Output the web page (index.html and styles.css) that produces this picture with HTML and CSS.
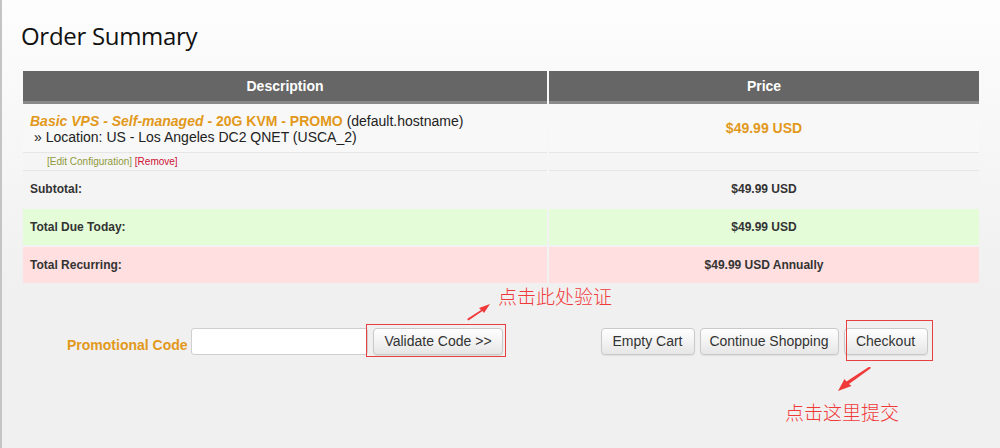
FILE: index.html
```html
<!DOCTYPE html>
<html lang="en">
<head>
<meta charset="utf-8">
<title>Order Summary</title>
<link rel="stylesheet" href="styles.css">
</head>
<body>
<div class="page">
  <h1 class="title">Order Summary</h1>
  <div class="cart">
    <div class="row head">
      <div class="cell">Description</div>
      <div class="cell">Price</div>
    </div>
    <div class="row product">
      <div class="cell desc">
        <div><em class="prod">Basic VPS - Self-managed</em><strong class="prod"> - 20G KVM - PROMO</strong> (default.hostname)</div>
        <div class="opt">&raquo; Location: US - Los Angeles DC2 QNET (USCA_2)</div>
      </div>
      <div class="cell price">$49.99 USD</div>
    </div>
    <div class="row edit">
      <div class="cell links"><span class="cfg">[Edit Configuration]</span> <span class="rm">[Remove]</span></div>
      <div class="cell"></div>
    </div>
    <div class="row total sub">
      <div class="cell">Subtotal:</div>
      <div class="cell amt">$49.99 USD</div>
    </div>
    <div class="row total due">
      <div class="cell">Total Due Today:</div>
      <div class="cell amt">$49.99 USD</div>
    </div>
    <div class="row total rec">
      <div class="cell">Total Recurring:</div>
      <div class="cell amt">$49.99 USD Annually</div>
    </div>
  </div>
  <div class="actions">
    <div class="promo">
      <label class="promo-label" for="code">Promotional Code</label>
      <input id="code" class="promo-input" type="text">
      <span class="mark">
        <button class="btn btn-validate" type="button">Validate Code &gt;&gt;</button>
        <span class="box box-validate"></span>
      </span>
    </div>
    <div class="buttons">
      <button class="btn btn-empty" type="button">Empty Cart</button>
      <button class="btn btn-continue" type="button">Continue Shopping</button>
      <span class="mark">
        <button class="btn btn-checkout" type="button">Checkout</button>
        <span class="box box-checkout"></span>
      </span>
    </div>
  </div>

  <div class="note note-validate">
    <svg class="arrow" width="26" height="18" viewBox="0 0 26 18"><path d="M1 16 L15 7 L13 5 L24 1 L18 10 L16.5 8 L2.5 17.5 Z" fill="#f03a3a"/></svg>
    <span class="note-text">点击此处验证</span>
  </div>
  <div class="note note-checkout">
    <svg class="arrow" width="36" height="26" viewBox="0 0 36 26"><path d="M34 1 L12 17 L14.5 19 L1 24 L7.5 12 L9.5 14.5 L32.5 -0.5 Z" fill="#f03a3a"/></svg>
    <span class="note-text">点击这里提交</span>
  </div>
</div>
</body>
</html>
```

FILE: styles.css
```css
html, body {
  margin: 0;
  padding: 0;
}
body {
  background: #f0f0f0;
  font-family: "Liberation Sans", Arial, sans-serif;
  color: #222;
}
.page {
  position: relative;
  height: 448px;
  box-sizing: border-box;
  border-left: 2px solid #c4c4c4;
  background: linear-gradient(#fdfdfd 0, #f0f0f0 285px, #f0f0f0 100%);
  padding-top: 20px;
}
.title {
  margin: 0 0 19px 19px;
  font-family: "Open Sans", "Noto Sans", sans-serif;
  font-weight: 400;
  font-size: 24px;
  line-height: 32px;
  color: #111;
  letter-spacing: -0.3px;
}
.cart {
  margin-left: 21px;
  width: 956px;
}
.row {
  display: grid;
  grid-template-columns: 524px 430px;
  column-gap: 2px;
}
.head .cell {
  background: #666;
  border-bottom: 3px solid #8a8a8a;
  height: 30px;
  line-height: 30px;
  text-align: center;
  color: #fff;
  font-weight: bold;
  font-size: 14px;
}
.product .cell {
  background: #f8f8f8;
  border-bottom: 1px solid #e6e6e6;
  height: 49px;
  box-sizing: border-box;
}
.desc {
  padding: 9px 0 0 7px;
  font-size: 14px;
  line-height: 16px;
  color: #222;
}
.prod {
  color: #e2991b;
  font-weight: bold;
}
em.prod {
  font-style: italic;
}
.opt {
  padding-left: 4px;
}
.price {
  display: flex;
  align-items: center;
  justify-content: center;
  color: #e2991b;
  font-weight: bold;
  font-size: 14px;
}
.edit .cell {
  background: #f5f5f5;
  border-bottom: 1px solid #e6e6e6;
  height: 18px;
  box-sizing: border-box;
}
.links {
  padding-left: 24px;
  font-size: 10px;
  line-height: 17px;
}
.cfg {
  color: #8f9a3a;
}
.rm {
  color: #cc1133;
}
.total {
  margin-bottom: 2px;
}
.total .cell {
  height: 36px;
  line-height: 36px;
  font-size: 12px;
  font-weight: bold;
  color: #333;
  padding-left: 7px;
}
.total .amt {
  text-align: center;
  padding-left: 0;
}
.sub .cell {
  background: #f4f4f4;
}
.due .cell {
  background: #e4fdd8;
}
.rec .cell {
  background: #ffdfdf;
}
.actions {
  margin-left: 21px;
  width: 956px;
  margin-top: 44px;
  display: grid;
  grid-template-columns: 524px 430px;
  column-gap: 2px;
  align-items: center;
}
.promo, .buttons {
  display: flex;
  justify-content: center;
  align-items: center;
  gap: 5px;
}
.promo {
  gap: 4px;
}
.promo-label {
  width: 120px;
  white-space: nowrap;
  color: #e2991b;
  font-weight: bold;
  font-size: 14px;
  margin-top: 8px;
}
.promo-input {
  width: 177px;
  height: 27px;
  box-sizing: border-box;
  border: 1px solid #cfcfcf;
  border-radius: 3px;
  background: #fff;
  margin: 1px 1px 0 0;
  padding: 0 6px;
}
.btn {
  height: 27px;
  padding: 0;
  box-sizing: border-box;
  font-family: "Liberation Sans", Arial, sans-serif;
  font-size: 14px;
  color: #333;
  background: linear-gradient(#ffffff, #e6e6e6);
  border: 1px solid #c9c9c9;
  border-radius: 4px;
  box-shadow: 0 1px 1px rgba(0, 0, 0, 0.08);
}
.btn-validate { width: 130px; }
.btn-empty { width: 94px; }
.btn-continue { width: 139px; }
.btn-checkout { width: 84px; }
.mark {
  position: relative;
  display: inline-block;
}
.mark .btn {
  display: block;
}
.box {
  position: absolute;
  border: 1px solid #e84040;
  pointer-events: none;
}
.box-validate {
  left: -7px;
  right: -3px;
  top: -4px;
  bottom: -2px;
}
.box-checkout {
  left: 2px;
  right: -5px;
  top: -8px;
  bottom: -6px;
}
.note {
  position: absolute;
  display: flex;
  color: #f03a3a;
  font-family: "Noto Sans CJK SC", sans-serif;
  font-weight: 300;
}
.note-validate {
  left: 464px;
  top: 283px;
  align-items: flex-end;
  gap: 6px;
}
.note-validate .arrow {
  margin-bottom: -12px;
}
.note-validate .note-text {
  font-size: 19px;
  line-height: 26px;
}
.note-checkout {
  left: 783px;
  top: 367px;
  flex-direction: column;
  align-items: flex-start;
}
.note-checkout .arrow {
  margin-left: 52px;
}
.note-checkout .note-text {
  font-size: 19px;
  line-height: 26px;
  margin-top: 6px;
}
```
